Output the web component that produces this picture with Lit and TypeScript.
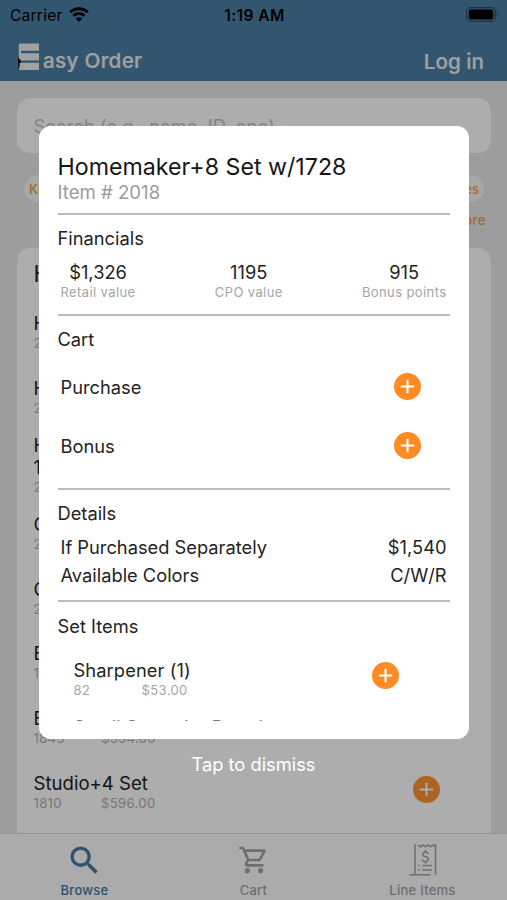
import { LitElement, html, css } from "lit";
import { customElement } from "lit/decorators.js";

const plus = html`<svg class="plus" viewBox="0 0 27 27"><circle cx="13.5" cy="13.5" r="13.5" /><path d="M13.5 6.8V20.2M6.8 13.5H20.2" /></svg>`;

@customElement("app-header")
class AppHeader extends LitElement {
  static styles = css`
    :host { display: flex; flex-direction: column; height: 81px; background: #4b7fa4; font-family: Inter, sans-serif; }
    .status { display: grid; grid-template-columns: 1fr auto 1fr; align-items: center; height: 30px; padding: 0 8px 0 10px; color: #000; font-size: 15.6px; }
    .carrier { display: flex; align-items: center; gap: 6px; letter-spacing: 0.2px; }
    .wifi { width: 20px; height: 15px; display: block; margin-top: -1px; }
    .time { font-weight: 600; letter-spacing: 0.4px; }
    .battery { justify-self: end; width: 33px; height: 15px; margin-top: -2px; }
    .bar { display: flex; align-items: flex-start; justify-content: space-between; height: 51px; padding: 0 23px 0 18px; color: #eee; font-size: 20.7px; font-weight: 500; line-height: 26px; -webkit-text-stroke: 0.2px #eee; }
    .brand { display: flex; align-items: flex-start; gap: 4px; margin-top: 13px; }
    .brand span { margin-top: 5px; letter-spacing: 0.3px; }
    .login { margin-top: 18.5px; }
  `;
  render() {
    return html`
      <div class="status">
        <div class="carrier"><span>Carrier</span>
          <svg class="wifi" viewBox="0 0 20 15"><path d="M1.2 5.3a12.6 12.6 0 0 1 17.6 0M4.4 8.7a8.1 8.1 0 0 1 11.2 0" fill="none" stroke="#000" stroke-width="2.9" /><path d="M10 15l-3.2-3.3a4.8 4.8 0 0 1 6.4 0z" /></svg>
        </div>
        <div class="time">1:19 AM</div>
        <svg class="battery" viewBox="0 0 33 15"><rect x=".6" y=".6" width="28.8" height="13.8" rx="4" fill="none" stroke="#2c475c" stroke-width="1.1" /><rect x="2.8" y="2.6" width="24.4" height="9.8" rx="2" /><path d="M31 5q2 2.5 0 5z" fill="#2c475c" /></svg>
      </div>
      <div class="bar">
        <div class="brand">
          <svg width="21" height="28" viewBox="0 0 21 28"><path d="M0 14.5h3V26H.5z" fill="#000" /><path d="M1.5.5H21v7.3H3V16H.8V2zM2.2 10.3H21v7.2H2.2zM1.8 19.7H21V27H1z" fill="#eee" /></svg>
          <span>asy Order</span>
        </div>
        <span class="login">Log in</span>
      </div>`;
  }
}

@customElement("tab-bar")
class TabBar extends LitElement {
  static styles = css`
    :host { display: grid; grid-template-columns: repeat(3, 1fr); height: 66px; border-top: 1.4px solid #d8d8d8; background: #fdfdfd; color: #a2a2a2; font: 500 13px/18px Inter, sans-serif; letter-spacing: 0.25px; }
    .tab { display: flex; flex-direction: column; align-items: center; padding-top: 7px; }
    .active { color: #4078a3; }
    .icon { height: 40px; display: flex; align-items: center; margin-top: -1px; margin-bottom: 1px; }
    svg { fill: currentColor; }
    .receipt { fill: none; stroke: currentColor; stroke-width: 1.5; }
  `;
  render() {
    return html`
      <div class="tab active"><div class="icon"><svg width="37" height="37" viewBox="0 0 24 24"><path stroke="currentColor" stroke-width=".2" d="M15.5 14h-.79l-.28-.27A6.471 6.471 0 0 0 16 9.5 6.5 6.5 0 1 0 9.5 16c1.61 0 3.09-.59 4.23-1.57l.27.28v.79l5 4.99L20.49 19l-4.99-5zm-6 0C7.01 14 5 11.99 5 9.5S7.01 5 9.5 5 14 7.01 14 9.5 11.99 14 9.5 14z" /></svg></div>Browse</div>
      <div class="tab"><div class="icon"><svg width="32" height="32" viewBox="0 0 24 24"><path d="M15.55 13c.75 0 1.41-.41 1.75-1.03l3.58-6.49A.996.996 0 0 0 20.01 4H5.21l-.94-2H1v2h2l3.6 7.59-1.35 2.44C4.52 15.37 5.48 17 7 17h12v-2H7l1.1-2h7.45zM6.16 6h12.15l-2.76 5H8.53L6.16 6zM7 18c-1.1 0-1.99.9-1.99 2S5.9 22 7 22s2-.9 2-2-.9-2-2-2zm10 0c-1.1 0-1.99.9-1.99 2s.89 2 1.99 2 2-.9 2-2-.9-2-2-2z" /></svg></div>Cart</div>
      <div class="tab"><div class="icon"><svg class="receipt" width="28" height="32" viewBox="0 0 28 32"><path d="M6 0V30.5M26.5 0V31M.5 30.7H21.5M9 1l2.5 1.8L14 1l2.5 1.8L19 1l2.5 1.8L24 1l2.5 1.8M13.5 21.5h9.5M13.5 26h9.5M9 21.5h1.5M9 26h1.5" /><path d="M19.2 10.2c-.3-1.4-1.3-1.9-2.7-1.9-3.3 0-3.7 3.2-.8 4.1 1.4.4 3.7.7 3.7 2.9 0 3-5.8 3-6.2.2M16.5 6v2.5M16.5 17.5v2" /></svg></div>Line Items</div>`;
  }
}

interface Row { name: string; id: string; price: string; wide?: boolean }

@customElement("browse-page")
class BrowsePage extends LitElement {
  static styles = css`
    :host { display: block; overflow: hidden; background: #e7e7e7; padding: 17px 16px 0 17px; font-family: Inter, sans-serif; color: #222; }
    .search { height: 55px; border-radius: 13px; background: #fff; display: flex; align-items: center; padding-left: 16.5px; font-size: 18.4px; color: #c2c2c2; }
    .chips { display: flex; justify-content: space-between; margin: 22px 7px 0; }
    .chip { height: 27px; line-height: 28px; border-radius: 14px; background: #f6f6f6; padding: 0 5px; font-size: 13px; color: #f29a45; font-weight: 500; }
    .more { text-align: right; font-size: 13px; line-height: 18px; margin: 9px 5px 19px; color: #f29a45; letter-spacing: 0.5px; font-weight: 500; }
    .card { background: #fff; border-radius: 13px; padding: 11px 16.5px 0 16.5px; height: 620px; }
    .heading { font-size: 22.5px; line-height: 30px; margin-bottom: 12px; }
    .row { height: 64.7px; display: flex; align-items: center; justify-content: space-between; padding-right: 35px; }
    .row.tall { height: 71.3px; }
    .name { font-size: 18.6px; line-height: 22px; margin-top: -2px; white-space: pre-line; }
    .meta { display: grid; grid-template-columns: 67.5px auto; font-size: 13.2px; line-height: 18px; color: #b0b0b0; letter-spacing: 0.3px; }
    .plus { width: 27px; height: 27px; margin-top: -6px; fill: #fc9432; stroke: #fff; stroke-width: 1.9; }
    .plus circle { stroke: none; }
  `;
  rows: Row[] = [
    { name: "Homemaker+8 Set", id: "2018", price: "$1,326.00" },
    { name: "Homemaker Set", id: "2016", price: "$1,126.00" },
    { name: "Homemaker Set w/\n1728 Knives", id: "2019", price: "$1,226.00", wide: true },
    { name: "Classic Set", id: "2021", price: "$986.00" },
    { name: "Companion Set", id: "2022", price: "$846.00" },
    { name: "Essentials+5 Set", id: "1846", price: "$766.00" },
    { name: "Essentials Set", id: "1845", price: "$554.00" },
    { name: "Studio+4 Set", id: "1810", price: "$596.00" },
  ];
  render() {
    return html`
      <div class="search">Search (e.g., name, ID, cpo)</div>
      <div class="chips"><span class="chip">Knives</span><span class="chip">Accessories</span></div>
      <div class="more">More</div>
      <div class="card">
        <div class="heading">Homemaker</div>
        ${this.rows.map((r) => html`<div class="row ${r.wide ? "tall" : ""}"><div><div class="name">${r.name}</div><div class="meta"><span>${r.id}</span><span>${r.price}</span></div></div>${plus}</div>`)}
      </div>`;
  }
}

@customElement("item-dialog")
class ItemDialog extends LitElement {
  static styles = css`
    :host { display: flex; flex-direction: column; box-sizing: border-box; width: 430px; height: 613.5px; padding: 27px 19px 18.4px; border-radius: 12px; background: #fff; color: #232323; font: 18.3px/24px Inter, sans-serif; }
    .scroll { overflow: hidden; flex: 1; min-height: 0; }
    .title { font-size: 23.2px; line-height: 28px; color: #151515; white-space: nowrap; }
    .number { color: #9b9b9b; font-size: 18.6px; line-height: 24px; margin-top: -1px; }
    hr { border: 0; height: 2px; background: #bcbcbc; margin: 0; }
    .number + hr { margin-top: 9px; }
    .section { margin-top: 11.5px; }
    .stats { display: flex; justify-content: space-between; padding: 9.5px 3px 13px; text-align: center; }
    .label { font-size: 13px; line-height: 17px; color: #a5a5a5; letter-spacing: 0.4px; }
    .cart { display: flex; align-items: center; justify-content: space-between; height: 59.3px; padding: 0 29px 0 3px; }
    .carts { padding: 6px 0 12px; }
    .details { padding: 8px 3px 10.5px; }
    .pair { display: flex; justify-content: space-between; line-height: 28.2px; }
    .set { display: flex; align-items: center; justify-content: space-between; height: 58px; padding: 0 51px 0 16px; letter-spacing: 0.1px; }
    .set + .set { margin-top: -1px; color: #777; }
    .set + .set .plus { margin-top: 14px; }
    .items { padding-top: 9px; }
    .item { padding-top: 5px; }
    .meta { display: grid; grid-template-columns: 68px auto; font-size: 13px; line-height: 17px; color: #a5a5a5; letter-spacing: 0.4px; }
    .plus { width: 27px; height: 27px; fill: #ff8b25; stroke: #fff; stroke-width: 2; }
    .plus circle { stroke: none; }
  `;
  stats = [["$1,326", "Retail value"], ["1195", "CPO value"], ["915", "Bonus points"]];
  items = [{ name: "Sharpener (1)", id: "82", price: "$53.00" }, { name: "Small Spreader Board", id: "", price: "" }];
  render() {
    return html`<div class="scroll">
      <div class="title">Homemaker+8 Set w/1728</div>
      <div class="number">Item # 2018</div>
      <hr />
      <div class="section">Financials</div>
      <div class="stats">${this.stats.map(([v, l]) => html`<div><div>${v}</div><div class="label">${l}</div></div>`)}</div>
      <hr />
      <div class="section">Cart</div>
      <div class="carts">${["Purchase", "Bonus"].map((n) => html`<div class="cart">${n}${plus}</div>`)}</div>
      <hr />
      <div class="section">Details</div>
      <div class="details">
        <div class="pair"><span>If Purchased Separately</span><span>$1,540</span></div>
        <div class="pair"><span>Available Colors</span><span>C/W/R</span></div>
      </div>
      <hr />
      <div class="section">Set Items</div>
      <div class="items">
        ${this.items.map((i) => html`<div class="set"><div class="item"><div>${i.name}</div><div class="meta"><span>${i.id || "\u00a0"}</span><span>${i.price}</span></div></div>${plus}</div>`)}
      </div>
    </div>`;
  }
}

@customElement("app-root")
class AppRoot extends LitElement {
  static styles = css`
    :host { display: block; height: 900px; }
    .screen { position: relative; height: 900px; overflow: hidden; display: grid; grid-template-rows: 81px 1fr auto; }
    browse-page { min-height: 0; }
    .overlay { position: absolute; inset: 0; background: rgba(0, 0, 0, 0.32); display: flex; flex-direction: column; align-items: center; padding-top: 125.5px; }
    .dismiss { margin-top: 13px; color: #fff; font: 18.3px/24px Inter, sans-serif; }
  `;
  render() {
    return html`<div class="screen">
      <app-header></app-header>
      <browse-page></browse-page>
      <tab-bar></tab-bar>
      <div class="overlay"><item-dialog></item-dialog><div class="dismiss">Tap to dismiss</div></div>
    </div>`;
  }
}
